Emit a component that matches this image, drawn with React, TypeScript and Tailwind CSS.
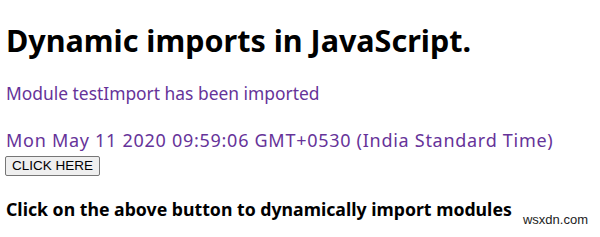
import React from 'react';

export default function App() {
  return (
    <div className="relative h-[237px] w-[600px] overflow-hidden bg-white px-[6px] font-['Noto_Sans',sans-serif] text-black">
      <h1 className="pt-[21px] text-[30.5px] font-bold leading-[38px]">Dynamic imports in JavaScript.</h1>
      <div className="mt-[22px] text-[17.4px] leading-[24px] text-[#663399]">Module testImport has been imported</div>
      <div className="mt-[23px] text-[18px] leading-[24px] tracking-[0.72px] text-[#663399]">
        Mon May 11 2020 09:59:06 GMT+0530 (India Standard Time)
      </div>
      <button className="ml-[-1px] h-[20px] rounded-[2px] border border-[#767676] bg-[#efefef] px-[6px] font-['Liberation_Sans',sans-serif] text-[13.5px] leading-[18px] text-black">
        CLICK HERE
      </button>
      <div className="mt-[21px] text-[17.7px] font-bold leading-[24px]">Click on the above button to dynamically import modules</div>
      <div className="absolute bottom-[8px] right-[12px] font-['Liberation_Sans',sans-serif] text-[13px] text-[#222]">wsxdn.com</div>
    </div>
  );
}
